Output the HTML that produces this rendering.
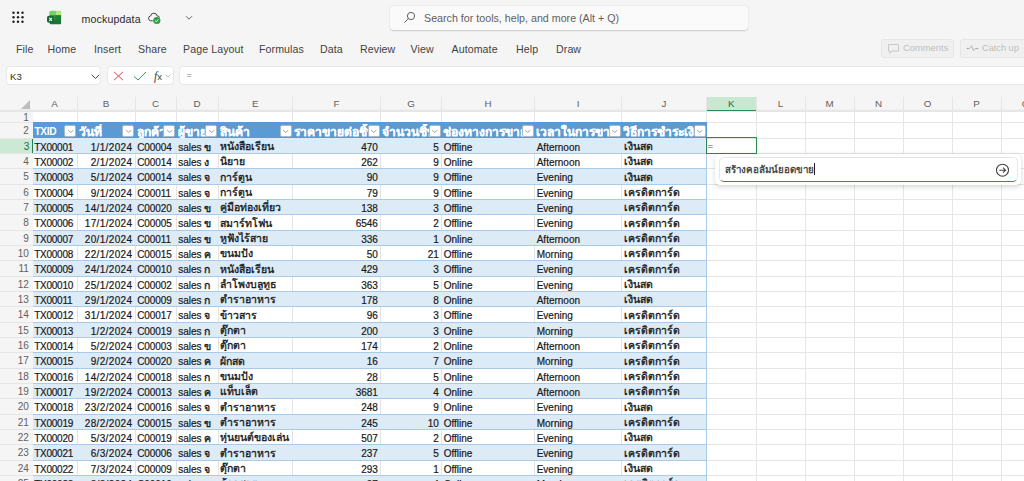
<!DOCTYPE html><html><head><meta charset="utf-8"><style>*{margin:0;padding:0;box-sizing:border-box}
html,body{width:1024px;height:481px;overflow:hidden;background:#f5f5f5;font-family:"Liberation Sans",sans-serif;position:relative}
.abs{position:absolute}
#grid{position:absolute;left:0;top:0;width:1024px;height:481px;overflow:hidden}
.colhdr{position:absolute;left:0;width:1024px;background:linear-gradient(#f5f5f5 0,#f5f5f5 12px,#f0f0f0 12px,#f0f0f0 13px,#e7e7e7 13px);border-bottom:1px solid #dadada}
.corner{position:absolute;left:21px;top:99.5px;width:0;height:0;border-left:9px solid transparent;border-bottom:9px solid #bdbdbd}
.ch{position:absolute;text-align:center;font-size:9.8px;color:#5f5f5f;line-height:14.5px}
.ch.sel{background:#c9e8d2;color:#1a6e3c;border-bottom:1.5px solid #2a8a50;line-height:13.5px}
.rh{position:absolute;left:0;width:32px;text-align:right;padding-right:3.2px;font-size:10px;color:#616161}
.rh span{display:block}
.rh.sel{background:#cbe9d4;color:#1a6e3c;border-right:1.5px solid #23824a;padding-right:2.7px;width:33px}
.cells{position:absolute;left:32.5px;width:1000px;height:400px;background:#fff}
.vl{position:absolute;width:1px;height:400px;background:#e6e6e6}
.hl{position:absolute;left:0;width:1024px;height:1px;background:#e6e6e6}
.thead{position:absolute;background:#5b9bd5}
.th{position:absolute;padding-left:1.5px;color:#fff;font-weight:bold;font-size:10.2px;letter-spacing:-0.4px;white-space:nowrap;overflow:hidden}
.fb{position:absolute;width:12px;height:12px;background:#fff;border:0.6px solid #a9b9c8;border-radius:2px}
.fb svg{position:absolute;left:-0.5px;top:-0.5px}
.tr{position:absolute;background:#fff}
.tr.band{background:#ddebf7}
.tvl{position:absolute;width:1px;background:#e3e3e3}
.tbl{position:absolute;height:1px;background:#a9cbea}
.tvr{position:absolute;width:1px;background:#a9cbea}
.td{position:absolute;font-size:10px;color:#1a1a1a;white-space:nowrap;overflow:hidden;padding:0 2.6px 0 2.2px;-webkit-text-stroke:0.2px #1a1a1a}
.td.r{text-align:right}
.td.th_{font-size:10.5px;margin-top:-1px;-webkit-text-stroke:0.35px #1a1a1a}
.c0{letter-spacing:-0.25px}.c1{letter-spacing:0.35px}.c2{letter-spacing:-0.1px}

.tb{font-size:10.5px;line-height:0;position:relative;top:-0.5px;font-weight:normal;-webkit-text-stroke:0.35px #1a1a1a}

.th.thai{font-size:12px;letter-spacing:0;-webkit-text-stroke:0.2px #fff}
</style></head><body>
<div class="abs" style="left:0;top:0;width:1024px;height:97px;background:#f5f5f5"></div>
<!-- waffle -->
<svg class="abs" style="left:11px;top:10px" width="14" height="14" viewBox="0 0 14 14"><g fill="#1e1e1e"><circle cx="2.5" cy="2.8" r="1.2"/><circle cx="7" cy="2.8" r="1.2"/><circle cx="11.5" cy="2.8" r="1.2"/><circle cx="2.5" cy="7.2" r="1.2"/><circle cx="7" cy="7.2" r="1.2"/><circle cx="11.5" cy="7.2" r="1.2"/><circle cx="2.5" cy="11.8" r="1.2"/><circle cx="7" cy="11.8" r="1.2"/><circle cx="11.5" cy="11.8" r="1.2"/></g></svg>
<!-- excel logo -->
<svg class="abs" style="left:46px;top:10px" width="16" height="15" viewBox="0 0 16 15">
<clipPath id="lc"><rect x="3.5" y="0.75" width="11.75" height="13.75" rx="1.6"/></clipPath>
<g clip-path="url(#lc)">
<rect x="3.5" y="0.75" width="11.75" height="13.75" fill="#1d7436"/>
<rect x="3.5" y="0.75" width="5.9" height="4.6" fill="#6cd46a"/>
<rect x="9.4" y="0.75" width="5.9" height="4.6" fill="#b6e97c"/>
<rect x="3.5" y="5.35" width="5.9" height="4.7" fill="#3ea64a"/>
<rect x="9.4" y="5.35" width="5.9" height="4.7" fill="#217f3a"/>
</g>
<rect x="1" y="5.8" width="7.3" height="7" rx="1.8" fill="#176a3a"/>
<path d="M3.3 7.9 L6 10.9 M6 7.9 L3.3 10.9" stroke="#f4fff6" stroke-width="1.05"/>
</svg>
<div class="abs" style="left:81.5px;top:10.5px;font-size:10.6px;color:#2a2a2a;line-height:16px;letter-spacing:0.15px">mockupdata</div>
<!-- cloud -->
<svg class="abs" style="left:147px;top:11px" width="15" height="15" viewBox="0 0 15 15">
<path d="M5.8 9.8 H3.7 A2.45 2.45 0 0 1 3.6 4.95 A3.3 3.3 0 0 1 10.1 4.9 A2.2 2.2 0 0 1 12.5 6.6" fill="none" stroke="#3a3a3a" stroke-width="0.95"/>
<circle cx="9.8" cy="9.5" r="3.6" fill="#2e9e48"/>
<path d="M8.1 9.7 L9.3 10.8 L11.4 8.5" fill="none" stroke="#fff" stroke-width="0.9"/>
</svg>
<svg class="abs" style="left:185px;top:15px" width="8" height="6" viewBox="0 0 8 6"><path d="M1 1.2 L4 4.2 L7 1.2" fill="none" stroke="#555" stroke-width="0.9"/></svg>
<!-- search -->
<div class="abs" style="left:390px;top:5.5px;width:358px;height:24.5px;background:#fafafa;border-radius:4px;box-shadow:0 0.5px 1.5px rgba(0,0,0,0.18)"></div>
<svg class="abs" style="left:403px;top:11px" width="13" height="13" viewBox="0 0 13 13"><circle cx="8" cy="5" r="3.6" fill="none" stroke="#606060" stroke-width="1"/><path d="M5.4 7.6 L1.5 11.5" stroke="#606060" stroke-width="1"/></svg>
<div class="abs" style="left:424px;top:11px;font-size:10.7px;color:#616161;line-height:15px;white-space:nowrap">Search for tools, help, and more (Alt + Q)</div>
<!-- ribbon tabs -->
<div class="abs tabs" style="top:41.5px;font-size:10.6px;color:#424242;line-height:14px;white-space:nowrap;letter-spacing:0.1px">
<span class="abs" style="left:16px">File</span>
<span class="abs" style="left:47.5px">Home</span>
<span class="abs" style="left:94px">Insert</span>
<span class="abs" style="left:138px">Share</span>
<span class="abs" style="left:183px">Page Layout</span>
<span class="abs" style="left:259px">Formulas</span>
<span class="abs" style="left:320px">Data</span>
<span class="abs" style="left:360px">Review</span>
<span class="abs" style="left:410.5px">View</span>
<span class="abs" style="left:451.5px">Automate</span>
<span class="abs" style="left:516px">Help</span>
<span class="abs" style="left:556px">Draw</span>
</div>
<!-- comments / catch up -->
<div class="abs" style="left:881px;top:39px;width:72.5px;height:18.5px;border:1px solid #e6e6e6;border-radius:3px;background:#f0f0f0"></div>
<svg class="abs" style="left:887px;top:43px" width="13" height="11" viewBox="0 0 13 11"><path d="M1.5 1 H11.5 V7.5 H5 L3 9.8 V7.5 H1.5 Z" fill="none" stroke="#c4c4c4" stroke-width="0.9" stroke-linejoin="round" transform="translate(0,0.5)"/></svg>
<div class="abs" style="left:903px;top:40.8px;font-size:9.4px;color:#bdbdbd;line-height:14px">Comments</div>
<div class="abs" style="left:960px;top:39px;width:70px;height:18.5px;border:1px solid #e6e6e6;border-radius:3px;background:#f0f0f0"></div>
<svg class="abs" style="left:966px;top:44px" width="13" height="9" viewBox="0 0 13 9"><path d="M1.5 4.5 H3.5 L5.5 1.8 L7.5 6.8 L9 4.5 H11.5" fill="none" stroke="#b0b0b0" stroke-width="0.9"/><circle cx="1.5" cy="4.5" r="0.8" fill="#a0a0a0"/><circle cx="11.5" cy="4.5" r="0.8" fill="#a0a0a0"/></svg>
<div class="abs" style="left:982px;top:40.8px;font-size:9.2px;color:#bdbdbd;line-height:14px;white-space:nowrap">Catch up</div>
<!-- formula bar -->
<div class="abs" style="left:6px;top:66.2px;width:95px;height:19.2px;background:#fff;border:1.5px solid #e8e8e8;border-radius:4px"></div>
<div class="abs" style="left:10px;top:70.3px;font-size:9.6px;color:#2e2e2e;line-height:14px">K3</div>
<svg class="abs" style="left:90.5px;top:74px" width="9" height="6" viewBox="0 0 9 6"><path d="M0.8 0.8 L4.5 4.5 L8.2 0.8" fill="none" stroke="#444" stroke-width="1"/></svg>
<div class="abs" style="left:107px;top:66.2px;width:66.5px;height:19.2px;background:#fff;border:1.5px solid #e8e8e8;border-radius:4px"></div>
<svg class="abs" style="left:113px;top:71px" width="11" height="10" viewBox="0 0 11 10"><path d="M1 0.8 L10 9.2 M10 0.8 L1 9.2" stroke="#e0424a" stroke-width="1"/></svg>
<svg class="abs" style="left:133px;top:70.5px" width="14" height="10" viewBox="0 0 14 10"><path d="M1 5.5 L5 9 L13 1" fill="none" stroke="#3aa35a" stroke-width="1"/></svg>
<div class="abs" style="left:154px;top:69px;font-size:11.5px;font-style:italic;color:#3a3a3a;line-height:14px;font-family:'Liberation Serif',serif">f<span style="font-size:9.5px;font-style:normal;font-family:'Liberation Sans',sans-serif">x</span></div>
<svg class="abs" style="left:165px;top:74px" width="6" height="4" viewBox="0 0 6 4"><path d="M0.8 0.8 L3 3 L5.2 0.8" fill="none" stroke="#999" stroke-width="0.7"/></svg>
<div class="abs" style="left:179px;top:66.2px;width:850px;height:19.2px;background:#fff;border:1.5px solid #e8e8e8;border-radius:4px"></div>
<div class="abs" style="left:186.5px;top:68.3px;font-size:9px;color:#777;line-height:14px">=</div>

<div id="grid"><div class="colhdr" style="top:97px;height:15px"></div><div class="corner"></div><div class="ch" style="left:32px;width:45px;top:97px;height:14px">A</div><div class="ch" style="left:77px;width:58px;top:97px;height:14px">B</div><div class="ch" style="left:135px;width:41px;top:97px;height:14px">C</div><div class="ch" style="left:176px;width:42px;top:97px;height:14px">D</div><div class="ch" style="left:218px;width:74.5px;top:97px;height:14px">E</div><div class="ch" style="left:292.5px;width:88.0px;top:97px;height:14px">F</div><div class="ch" style="left:380.5px;width:61.0px;top:97px;height:14px">G</div><div class="ch" style="left:441.5px;width:93.0px;top:97px;height:14px">H</div><div class="ch" style="left:534.5px;width:87.0px;top:97px;height:14px">I</div><div class="ch" style="left:621.5px;width:85.0px;top:97px;height:14px">J</div><div class="ch sel" style="left:706.5px;width:49.5px;top:97px;height:14px">K</div><div class="ch" style="left:756px;width:49px;top:97px;height:14px">L</div><div class="ch" style="left:805px;width:49px;top:97px;height:14px">M</div><div class="ch" style="left:854px;width:49px;top:97px;height:14px">N</div><div class="ch" style="left:903px;width:49px;top:97px;height:14px">O</div><div class="ch" style="left:952px;width:49px;top:97px;height:14px">P</div><div class="ch" style="left:1001px;width:49px;top:97px;height:14px">Q</div><div class="rh" style="top:111.00px;height:11.00px"><span style="line-height:11.00px;margin-top:1.4px">1</span></div><div class="rh" style="top:122.00px;height:16.00px"><span style="line-height:16.00px;margin-top:1.4px">2</span></div><div class="rh sel" style="top:138.00px;height:15.00px"><span style="line-height:15.00px;margin-top:1.4px">3</span></div><div class="rh" style="top:153.00px;height:15.00px"><span style="line-height:15.00px;margin-top:1.4px">4</span></div><div class="rh" style="top:168.00px;height:16.00px"><span style="line-height:16.00px;margin-top:1.4px">5</span></div><div class="rh" style="top:184.00px;height:15.00px"><span style="line-height:15.00px;margin-top:1.4px">6</span></div><div class="rh" style="top:199.00px;height:15.00px"><span style="line-height:15.00px;margin-top:1.4px">7</span></div><div class="rh" style="top:214.00px;height:16.00px"><span style="line-height:16.00px;margin-top:1.4px">8</span></div><div class="rh" style="top:230.00px;height:15.00px"><span style="line-height:15.00px;margin-top:1.4px">9</span></div><div class="rh" style="top:245.00px;height:15.00px"><span style="line-height:15.00px;margin-top:1.4px">10</span></div><div class="rh" style="top:260.00px;height:16.00px"><span style="line-height:16.00px;margin-top:1.4px">11</span></div><div class="rh" style="top:276.00px;height:15.00px"><span style="line-height:15.00px;margin-top:1.4px">12</span></div><div class="rh" style="top:291.00px;height:15.00px"><span style="line-height:15.00px;margin-top:1.4px">13</span></div><div class="rh" style="top:306.00px;height:16.00px"><span style="line-height:16.00px;margin-top:1.4px">14</span></div><div class="rh" style="top:322.00px;height:15.00px"><span style="line-height:15.00px;margin-top:1.4px">15</span></div><div class="rh" style="top:337.00px;height:15.00px"><span style="line-height:15.00px;margin-top:1.4px">16</span></div><div class="rh" style="top:352.00px;height:16.00px"><span style="line-height:16.00px;margin-top:1.4px">17</span></div><div class="rh" style="top:368.00px;height:15.00px"><span style="line-height:15.00px;margin-top:1.4px">18</span></div><div class="rh" style="top:383.00px;height:15.00px"><span style="line-height:15.00px;margin-top:1.4px">19</span></div><div class="rh" style="top:398.00px;height:16.00px"><span style="line-height:16.00px;margin-top:1.4px">20</span></div><div class="rh" style="top:414.00px;height:15.00px"><span style="line-height:15.00px;margin-top:1.4px">21</span></div><div class="rh" style="top:429.00px;height:15.00px"><span style="line-height:15.00px;margin-top:1.4px">22</span></div><div class="rh" style="top:444.00px;height:16.00px"><span style="line-height:16.00px;margin-top:1.4px">23</span></div><div class="rh" style="top:460.00px;height:15.00px"><span style="line-height:15.00px;margin-top:1.4px">24</span></div><div class="rh" style="top:475.00px;height:15.00px"><span style="line-height:15.00px;margin-top:1.4px">25</span></div><div class="cells" style="top:111px"></div><div class="vl" style="left:76.5px;top:97px"></div><div class="vl" style="left:134.5px;top:97px"></div><div class="vl" style="left:175.5px;top:97px"></div><div class="vl" style="left:217.5px;top:97px"></div><div class="vl" style="left:292.0px;top:97px"></div><div class="vl" style="left:380.0px;top:97px"></div><div class="vl" style="left:441.0px;top:97px"></div><div class="vl" style="left:534.0px;top:97px"></div><div class="vl" style="left:621.0px;top:97px"></div><div class="vl" style="left:706.0px;top:97px"></div><div class="vl" style="left:755.5px;top:97px"></div><div class="vl" style="left:804.5px;top:97px"></div><div class="vl" style="left:853.5px;top:97px"></div><div class="vl" style="left:902.5px;top:97px"></div><div class="vl" style="left:951.5px;top:97px"></div><div class="vl" style="left:1000.5px;top:97px"></div><div class="vl" style="left:1049.5px;top:97px"></div><div class="hl" style="top:111px"></div><div class="hl" style="top:122px"></div><div class="hl" style="top:138px"></div><div class="hl" style="top:153px"></div><div class="hl" style="top:168px"></div><div class="hl" style="top:184px"></div><div class="hl" style="top:199px"></div><div class="hl" style="top:214px"></div><div class="hl" style="top:230px"></div><div class="hl" style="top:245px"></div><div class="hl" style="top:260px"></div><div class="hl" style="top:276px"></div><div class="hl" style="top:291px"></div><div class="hl" style="top:306px"></div><div class="hl" style="top:322px"></div><div class="hl" style="top:337px"></div><div class="hl" style="top:352px"></div><div class="hl" style="top:368px"></div><div class="hl" style="top:383px"></div><div class="hl" style="top:398px"></div><div class="hl" style="top:414px"></div><div class="hl" style="top:429px"></div><div class="hl" style="top:444px"></div><div class="hl" style="top:460px"></div><div class="hl" style="top:475px"></div><div class="hl" style="top:490px"></div><div class="thead" style="left:33px;width:673.5px;top:122px;height:16.5px"></div><div class="th" style="left:33px;width:44px;top:123.8px;height:14.2px;line-height:16px">TXID</div><div class="fb" style="left:64px;top:124.6px"><svg width="12" height="12" viewBox="0 0 12 12"><path d="M3.1 5.3 L5.7 7.3 L8.3 5.3" fill="none" stroke="#8a8a8a" stroke-width="0.8"/></svg></div><div class="th thai" style="left:77px;width:58px;top:123.8px;height:14.2px;line-height:16px">วันที่</div><div class="fb" style="left:122px;top:124.6px"><svg width="12" height="12" viewBox="0 0 12 12"><path d="M3.1 5.3 L5.7 7.3 L8.3 5.3" fill="none" stroke="#8a8a8a" stroke-width="0.8"/></svg></div><div class="th thai" style="left:135px;width:41px;top:123.8px;height:14.2px;line-height:16px">ลูกค้า</div><div class="fb" style="left:163px;top:124.6px"><svg width="12" height="12" viewBox="0 0 12 12"><path d="M3.1 5.3 L5.7 7.3 L8.3 5.3" fill="none" stroke="#8a8a8a" stroke-width="0.8"/></svg></div><div class="th thai" style="left:176px;width:42px;top:123.8px;height:14.2px;line-height:16px">ผู้ขาย</div><div class="fb" style="left:205px;top:124.6px"><svg width="12" height="12" viewBox="0 0 12 12"><path d="M3.1 5.3 L5.7 7.3 L8.3 5.3" fill="none" stroke="#8a8a8a" stroke-width="0.8"/></svg></div><div class="th thai" style="left:218px;width:74.5px;top:123.8px;height:14.2px;line-height:16px">สินค้า</div><div class="fb" style="left:279.5px;top:124.6px"><svg width="12" height="12" viewBox="0 0 12 12"><path d="M3.1 5.3 L5.7 7.3 L8.3 5.3" fill="none" stroke="#8a8a8a" stroke-width="0.8"/></svg></div><div class="th thai" style="left:292.5px;width:88.0px;top:123.8px;height:14.2px;line-height:16px">ราคาขายต่อชิ้น</div><div class="fb" style="left:367.5px;top:124.6px"><svg width="12" height="12" viewBox="0 0 12 12"><path d="M3.1 5.3 L5.7 7.3 L8.3 5.3" fill="none" stroke="#8a8a8a" stroke-width="0.8"/></svg></div><div class="th thai" style="left:380.5px;width:61.0px;top:123.8px;height:14.2px;line-height:16px">จำนวนชิ้น</div><div class="fb" style="left:428.5px;top:124.6px"><svg width="12" height="12" viewBox="0 0 12 12"><path d="M3.1 5.3 L5.7 7.3 L8.3 5.3" fill="none" stroke="#8a8a8a" stroke-width="0.8"/></svg></div><div class="th thai" style="left:441.5px;width:93.0px;top:123.8px;height:14.2px;line-height:16px">ช่องทางการขาย</div><div class="fb" style="left:521.5px;top:124.6px"><svg width="12" height="12" viewBox="0 0 12 12"><path d="M3.1 5.3 L5.7 7.3 L8.3 5.3" fill="none" stroke="#8a8a8a" stroke-width="0.8"/></svg></div><div class="th thai" style="left:534.5px;width:87.0px;top:123.8px;height:14.2px;line-height:16px">เวลาในการขาย</div><div class="fb" style="left:608.5px;top:124.6px"><svg width="12" height="12" viewBox="0 0 12 12"><path d="M3.1 5.3 L5.7 7.3 L8.3 5.3" fill="none" stroke="#8a8a8a" stroke-width="0.8"/></svg></div><div class="th thai" style="left:621.5px;width:85.0px;top:123.8px;height:14.2px;line-height:16px">วิธีการชำระเงิน</div><div class="fb" style="left:693.5px;top:124.6px"><svg width="12" height="12" viewBox="0 0 12 12"><path d="M3.1 5.3 L5.7 7.3 L8.3 5.3" fill="none" stroke="#8a8a8a" stroke-width="0.8"/></svg></div><div class="tr band" style="left:33px;width:673.5px;top:138.00px;height:15.00px"></div><div class="tr" style="left:33px;width:673.5px;top:153.00px;height:15.00px"></div><div class="tvl" style="left:76.5px;top:153.00px;height:15.00px"></div><div class="tvl" style="left:134.5px;top:153.00px;height:15.00px"></div><div class="tvl" style="left:175.5px;top:153.00px;height:15.00px"></div><div class="tvl" style="left:217.5px;top:153.00px;height:15.00px"></div><div class="tvl" style="left:292.0px;top:153.00px;height:15.00px"></div><div class="tvl" style="left:380.0px;top:153.00px;height:15.00px"></div><div class="tvl" style="left:441.0px;top:153.00px;height:15.00px"></div><div class="tvl" style="left:534.0px;top:153.00px;height:15.00px"></div><div class="tvl" style="left:621.0px;top:153.00px;height:15.00px"></div><div class="tr band" style="left:33px;width:673.5px;top:168.00px;height:16.00px"></div><div class="tr" style="left:33px;width:673.5px;top:184.00px;height:15.00px"></div><div class="tvl" style="left:76.5px;top:184.00px;height:15.00px"></div><div class="tvl" style="left:134.5px;top:184.00px;height:15.00px"></div><div class="tvl" style="left:175.5px;top:184.00px;height:15.00px"></div><div class="tvl" style="left:217.5px;top:184.00px;height:15.00px"></div><div class="tvl" style="left:292.0px;top:184.00px;height:15.00px"></div><div class="tvl" style="left:380.0px;top:184.00px;height:15.00px"></div><div class="tvl" style="left:441.0px;top:184.00px;height:15.00px"></div><div class="tvl" style="left:534.0px;top:184.00px;height:15.00px"></div><div class="tvl" style="left:621.0px;top:184.00px;height:15.00px"></div><div class="tr band" style="left:33px;width:673.5px;top:199.00px;height:15.00px"></div><div class="tr" style="left:33px;width:673.5px;top:214.00px;height:16.00px"></div><div class="tvl" style="left:76.5px;top:214.00px;height:16.00px"></div><div class="tvl" style="left:134.5px;top:214.00px;height:16.00px"></div><div class="tvl" style="left:175.5px;top:214.00px;height:16.00px"></div><div class="tvl" style="left:217.5px;top:214.00px;height:16.00px"></div><div class="tvl" style="left:292.0px;top:214.00px;height:16.00px"></div><div class="tvl" style="left:380.0px;top:214.00px;height:16.00px"></div><div class="tvl" style="left:441.0px;top:214.00px;height:16.00px"></div><div class="tvl" style="left:534.0px;top:214.00px;height:16.00px"></div><div class="tvl" style="left:621.0px;top:214.00px;height:16.00px"></div><div class="tr band" style="left:33px;width:673.5px;top:230.00px;height:15.00px"></div><div class="tr" style="left:33px;width:673.5px;top:245.00px;height:15.00px"></div><div class="tvl" style="left:76.5px;top:245.00px;height:15.00px"></div><div class="tvl" style="left:134.5px;top:245.00px;height:15.00px"></div><div class="tvl" style="left:175.5px;top:245.00px;height:15.00px"></div><div class="tvl" style="left:217.5px;top:245.00px;height:15.00px"></div><div class="tvl" style="left:292.0px;top:245.00px;height:15.00px"></div><div class="tvl" style="left:380.0px;top:245.00px;height:15.00px"></div><div class="tvl" style="left:441.0px;top:245.00px;height:15.00px"></div><div class="tvl" style="left:534.0px;top:245.00px;height:15.00px"></div><div class="tvl" style="left:621.0px;top:245.00px;height:15.00px"></div><div class="tr band" style="left:33px;width:673.5px;top:260.00px;height:16.00px"></div><div class="tr" style="left:33px;width:673.5px;top:276.00px;height:15.00px"></div><div class="tvl" style="left:76.5px;top:276.00px;height:15.00px"></div><div class="tvl" style="left:134.5px;top:276.00px;height:15.00px"></div><div class="tvl" style="left:175.5px;top:276.00px;height:15.00px"></div><div class="tvl" style="left:217.5px;top:276.00px;height:15.00px"></div><div class="tvl" style="left:292.0px;top:276.00px;height:15.00px"></div><div class="tvl" style="left:380.0px;top:276.00px;height:15.00px"></div><div class="tvl" style="left:441.0px;top:276.00px;height:15.00px"></div><div class="tvl" style="left:534.0px;top:276.00px;height:15.00px"></div><div class="tvl" style="left:621.0px;top:276.00px;height:15.00px"></div><div class="tr band" style="left:33px;width:673.5px;top:291.00px;height:15.00px"></div><div class="tr" style="left:33px;width:673.5px;top:306.00px;height:16.00px"></div><div class="tvl" style="left:76.5px;top:306.00px;height:16.00px"></div><div class="tvl" style="left:134.5px;top:306.00px;height:16.00px"></div><div class="tvl" style="left:175.5px;top:306.00px;height:16.00px"></div><div class="tvl" style="left:217.5px;top:306.00px;height:16.00px"></div><div class="tvl" style="left:292.0px;top:306.00px;height:16.00px"></div><div class="tvl" style="left:380.0px;top:306.00px;height:16.00px"></div><div class="tvl" style="left:441.0px;top:306.00px;height:16.00px"></div><div class="tvl" style="left:534.0px;top:306.00px;height:16.00px"></div><div class="tvl" style="left:621.0px;top:306.00px;height:16.00px"></div><div class="tr band" style="left:33px;width:673.5px;top:322.00px;height:15.00px"></div><div class="tr" style="left:33px;width:673.5px;top:337.00px;height:15.00px"></div><div class="tvl" style="left:76.5px;top:337.00px;height:15.00px"></div><div class="tvl" style="left:134.5px;top:337.00px;height:15.00px"></div><div class="tvl" style="left:175.5px;top:337.00px;height:15.00px"></div><div class="tvl" style="left:217.5px;top:337.00px;height:15.00px"></div><div class="tvl" style="left:292.0px;top:337.00px;height:15.00px"></div><div class="tvl" style="left:380.0px;top:337.00px;height:15.00px"></div><div class="tvl" style="left:441.0px;top:337.00px;height:15.00px"></div><div class="tvl" style="left:534.0px;top:337.00px;height:15.00px"></div><div class="tvl" style="left:621.0px;top:337.00px;height:15.00px"></div><div class="tr band" style="left:33px;width:673.5px;top:352.00px;height:16.00px"></div><div class="tr" style="left:33px;width:673.5px;top:368.00px;height:15.00px"></div><div class="tvl" style="left:76.5px;top:368.00px;height:15.00px"></div><div class="tvl" style="left:134.5px;top:368.00px;height:15.00px"></div><div class="tvl" style="left:175.5px;top:368.00px;height:15.00px"></div><div class="tvl" style="left:217.5px;top:368.00px;height:15.00px"></div><div class="tvl" style="left:292.0px;top:368.00px;height:15.00px"></div><div class="tvl" style="left:380.0px;top:368.00px;height:15.00px"></div><div class="tvl" style="left:441.0px;top:368.00px;height:15.00px"></div><div class="tvl" style="left:534.0px;top:368.00px;height:15.00px"></div><div class="tvl" style="left:621.0px;top:368.00px;height:15.00px"></div><div class="tr band" style="left:33px;width:673.5px;top:383.00px;height:15.00px"></div><div class="tr" style="left:33px;width:673.5px;top:398.00px;height:16.00px"></div><div class="tvl" style="left:76.5px;top:398.00px;height:16.00px"></div><div class="tvl" style="left:134.5px;top:398.00px;height:16.00px"></div><div class="tvl" style="left:175.5px;top:398.00px;height:16.00px"></div><div class="tvl" style="left:217.5px;top:398.00px;height:16.00px"></div><div class="tvl" style="left:292.0px;top:398.00px;height:16.00px"></div><div class="tvl" style="left:380.0px;top:398.00px;height:16.00px"></div><div class="tvl" style="left:441.0px;top:398.00px;height:16.00px"></div><div class="tvl" style="left:534.0px;top:398.00px;height:16.00px"></div><div class="tvl" style="left:621.0px;top:398.00px;height:16.00px"></div><div class="tr band" style="left:33px;width:673.5px;top:414.00px;height:15.00px"></div><div class="tr" style="left:33px;width:673.5px;top:429.00px;height:15.00px"></div><div class="tvl" style="left:76.5px;top:429.00px;height:15.00px"></div><div class="tvl" style="left:134.5px;top:429.00px;height:15.00px"></div><div class="tvl" style="left:175.5px;top:429.00px;height:15.00px"></div><div class="tvl" style="left:217.5px;top:429.00px;height:15.00px"></div><div class="tvl" style="left:292.0px;top:429.00px;height:15.00px"></div><div class="tvl" style="left:380.0px;top:429.00px;height:15.00px"></div><div class="tvl" style="left:441.0px;top:429.00px;height:15.00px"></div><div class="tvl" style="left:534.0px;top:429.00px;height:15.00px"></div><div class="tvl" style="left:621.0px;top:429.00px;height:15.00px"></div><div class="tr band" style="left:33px;width:673.5px;top:444.00px;height:16.00px"></div><div class="tr" style="left:33px;width:673.5px;top:460.00px;height:15.00px"></div><div class="tvl" style="left:76.5px;top:460.00px;height:15.00px"></div><div class="tvl" style="left:134.5px;top:460.00px;height:15.00px"></div><div class="tvl" style="left:175.5px;top:460.00px;height:15.00px"></div><div class="tvl" style="left:217.5px;top:460.00px;height:15.00px"></div><div class="tvl" style="left:292.0px;top:460.00px;height:15.00px"></div><div class="tvl" style="left:380.0px;top:460.00px;height:15.00px"></div><div class="tvl" style="left:441.0px;top:460.00px;height:15.00px"></div><div class="tvl" style="left:534.0px;top:460.00px;height:15.00px"></div><div class="tvl" style="left:621.0px;top:460.00px;height:15.00px"></div><div class="tr band" style="left:33px;width:673.5px;top:475.00px;height:15.00px"></div><div class="tbl" style="left:33px;width:673.5px;top:153px"></div><div class="tbl" style="left:33px;width:673.5px;top:168px"></div><div class="tbl" style="left:33px;width:673.5px;top:184px"></div><div class="tbl" style="left:33px;width:673.5px;top:199px"></div><div class="tbl" style="left:33px;width:673.5px;top:214px"></div><div class="tbl" style="left:33px;width:673.5px;top:230px"></div><div class="tbl" style="left:33px;width:673.5px;top:245px"></div><div class="tbl" style="left:33px;width:673.5px;top:260px"></div><div class="tbl" style="left:33px;width:673.5px;top:276px"></div><div class="tbl" style="left:33px;width:673.5px;top:291px"></div><div class="tbl" style="left:33px;width:673.5px;top:306px"></div><div class="tbl" style="left:33px;width:673.5px;top:322px"></div><div class="tbl" style="left:33px;width:673.5px;top:337px"></div><div class="tbl" style="left:33px;width:673.5px;top:352px"></div><div class="tbl" style="left:33px;width:673.5px;top:368px"></div><div class="tbl" style="left:33px;width:673.5px;top:383px"></div><div class="tbl" style="left:33px;width:673.5px;top:398px"></div><div class="tbl" style="left:33px;width:673.5px;top:414px"></div><div class="tbl" style="left:33px;width:673.5px;top:429px"></div><div class="tbl" style="left:33px;width:673.5px;top:444px"></div><div class="tbl" style="left:33px;width:673.5px;top:460px"></div><div class="tbl" style="left:33px;width:673.5px;top:475px"></div><div class="tvr" style="left:706.0px;top:138px;height:343px"></div><div class="td l c0" style="left:32px;width:45px;top:140.10px;height:12.90px;line-height:15.00px">TX00001</div><div class="td r c1" style="left:77px;width:58px;top:140.10px;height:12.90px;line-height:15.00px">1/1/2024</div><div class="td l c2" style="left:135px;width:41px;top:140.10px;height:12.90px;line-height:15.00px">C00004</div><div class="td l c3" style="left:176px;width:42px;top:140.10px;height:12.90px;line-height:15.00px">sales <b class="tb">ข</b></div><div class="td l th_ c4" style="left:218px;width:74.5px;top:140.10px;height:12.90px;line-height:15.00px">หนังสือเรียน</div><div class="td r c5" style="left:292.5px;width:88.0px;top:140.10px;height:12.90px;line-height:15.00px">470</div><div class="td r c6" style="left:380.5px;width:61.0px;top:140.10px;height:12.90px;line-height:15.00px">5</div><div class="td l c7" style="left:441.5px;width:93.0px;top:140.10px;height:12.90px;line-height:15.00px">Offline</div><div class="td l c8" style="left:534.5px;width:87.0px;top:140.10px;height:12.90px;line-height:15.00px">Afternoon</div><div class="td l th_ c9" style="left:621.5px;width:85.0px;top:140.10px;height:12.90px;line-height:15.00px">เงินสด</div><div class="td l c0" style="left:32px;width:45px;top:155.10px;height:12.90px;line-height:15.00px">TX00002</div><div class="td r c1" style="left:77px;width:58px;top:155.10px;height:12.90px;line-height:15.00px">2/1/2024</div><div class="td l c2" style="left:135px;width:41px;top:155.10px;height:12.90px;line-height:15.00px">C00014</div><div class="td l c3" style="left:176px;width:42px;top:155.10px;height:12.90px;line-height:15.00px">sales <b class="tb">ง</b></div><div class="td l th_ c4" style="left:218px;width:74.5px;top:155.10px;height:12.90px;line-height:15.00px">นิยาย</div><div class="td r c5" style="left:292.5px;width:88.0px;top:155.10px;height:12.90px;line-height:15.00px">262</div><div class="td r c6" style="left:380.5px;width:61.0px;top:155.10px;height:12.90px;line-height:15.00px">9</div><div class="td l c7" style="left:441.5px;width:93.0px;top:155.10px;height:12.90px;line-height:15.00px">Online</div><div class="td l c8" style="left:534.5px;width:87.0px;top:155.10px;height:12.90px;line-height:15.00px">Afternoon</div><div class="td l th_ c9" style="left:621.5px;width:85.0px;top:155.10px;height:12.90px;line-height:15.00px">เงินสด</div><div class="td l c0" style="left:32px;width:45px;top:170.10px;height:13.90px;line-height:16.00px">TX00003</div><div class="td r c1" style="left:77px;width:58px;top:170.10px;height:13.90px;line-height:16.00px">5/1/2024</div><div class="td l c2" style="left:135px;width:41px;top:170.10px;height:13.90px;line-height:16.00px">C00014</div><div class="td l c3" style="left:176px;width:42px;top:170.10px;height:13.90px;line-height:16.00px">sales <b class="tb">จ</b></div><div class="td l th_ c4" style="left:218px;width:74.5px;top:170.10px;height:13.90px;line-height:16.00px">การ์ตูน</div><div class="td r c5" style="left:292.5px;width:88.0px;top:170.10px;height:13.90px;line-height:16.00px">90</div><div class="td r c6" style="left:380.5px;width:61.0px;top:170.10px;height:13.90px;line-height:16.00px">9</div><div class="td l c7" style="left:441.5px;width:93.0px;top:170.10px;height:13.90px;line-height:16.00px">Offline</div><div class="td l c8" style="left:534.5px;width:87.0px;top:170.10px;height:13.90px;line-height:16.00px">Evening</div><div class="td l th_ c9" style="left:621.5px;width:85.0px;top:170.10px;height:13.90px;line-height:16.00px">เงินสด</div><div class="td l c0" style="left:32px;width:45px;top:186.10px;height:12.90px;line-height:15.00px">TX00004</div><div class="td r c1" style="left:77px;width:58px;top:186.10px;height:12.90px;line-height:15.00px">9/1/2024</div><div class="td l c2" style="left:135px;width:41px;top:186.10px;height:12.90px;line-height:15.00px">C00011</div><div class="td l c3" style="left:176px;width:42px;top:186.10px;height:12.90px;line-height:15.00px">sales <b class="tb">จ</b></div><div class="td l th_ c4" style="left:218px;width:74.5px;top:186.10px;height:12.90px;line-height:15.00px">การ์ตูน</div><div class="td r c5" style="left:292.5px;width:88.0px;top:186.10px;height:12.90px;line-height:15.00px">79</div><div class="td r c6" style="left:380.5px;width:61.0px;top:186.10px;height:12.90px;line-height:15.00px">9</div><div class="td l c7" style="left:441.5px;width:93.0px;top:186.10px;height:12.90px;line-height:15.00px">Offline</div><div class="td l c8" style="left:534.5px;width:87.0px;top:186.10px;height:12.90px;line-height:15.00px">Evening</div><div class="td l th_ c9" style="left:621.5px;width:85.0px;top:186.10px;height:12.90px;line-height:15.00px">เครดิตการ์ด</div><div class="td l c0" style="left:32px;width:45px;top:201.10px;height:12.90px;line-height:15.00px">TX00005</div><div class="td r c1" style="left:77px;width:58px;top:201.10px;height:12.90px;line-height:15.00px">14/1/2024</div><div class="td l c2" style="left:135px;width:41px;top:201.10px;height:12.90px;line-height:15.00px">C00020</div><div class="td l c3" style="left:176px;width:42px;top:201.10px;height:12.90px;line-height:15.00px">sales <b class="tb">ข</b></div><div class="td l th_ c4" style="left:218px;width:74.5px;top:201.10px;height:12.90px;line-height:15.00px">คู่มือท่องเที่ยว</div><div class="td r c5" style="left:292.5px;width:88.0px;top:201.10px;height:12.90px;line-height:15.00px">138</div><div class="td r c6" style="left:380.5px;width:61.0px;top:201.10px;height:12.90px;line-height:15.00px">3</div><div class="td l c7" style="left:441.5px;width:93.0px;top:201.10px;height:12.90px;line-height:15.00px">Offline</div><div class="td l c8" style="left:534.5px;width:87.0px;top:201.10px;height:12.90px;line-height:15.00px">Evening</div><div class="td l th_ c9" style="left:621.5px;width:85.0px;top:201.10px;height:12.90px;line-height:15.00px">เครดิตการ์ด</div><div class="td l c0" style="left:32px;width:45px;top:216.10px;height:13.90px;line-height:16.00px">TX00006</div><div class="td r c1" style="left:77px;width:58px;top:216.10px;height:13.90px;line-height:16.00px">17/1/2024</div><div class="td l c2" style="left:135px;width:41px;top:216.10px;height:13.90px;line-height:16.00px">C00005</div><div class="td l c3" style="left:176px;width:42px;top:216.10px;height:13.90px;line-height:16.00px">sales <b class="tb">ข</b></div><div class="td l th_ c4" style="left:218px;width:74.5px;top:216.10px;height:13.90px;line-height:16.00px">สมาร์ทโฟน</div><div class="td r c5" style="left:292.5px;width:88.0px;top:216.10px;height:13.90px;line-height:16.00px">6546</div><div class="td r c6" style="left:380.5px;width:61.0px;top:216.10px;height:13.90px;line-height:16.00px">2</div><div class="td l c7" style="left:441.5px;width:93.0px;top:216.10px;height:13.90px;line-height:16.00px">Offline</div><div class="td l c8" style="left:534.5px;width:87.0px;top:216.10px;height:13.90px;line-height:16.00px">Evening</div><div class="td l th_ c9" style="left:621.5px;width:85.0px;top:216.10px;height:13.90px;line-height:16.00px">เครดิตการ์ด</div><div class="td l c0" style="left:32px;width:45px;top:232.10px;height:12.90px;line-height:15.00px">TX00007</div><div class="td r c1" style="left:77px;width:58px;top:232.10px;height:12.90px;line-height:15.00px">20/1/2024</div><div class="td l c2" style="left:135px;width:41px;top:232.10px;height:12.90px;line-height:15.00px">C00011</div><div class="td l c3" style="left:176px;width:42px;top:232.10px;height:12.90px;line-height:15.00px">sales <b class="tb">ข</b></div><div class="td l th_ c4" style="left:218px;width:74.5px;top:232.10px;height:12.90px;line-height:15.00px">หูฟังไร้สาย</div><div class="td r c5" style="left:292.5px;width:88.0px;top:232.10px;height:12.90px;line-height:15.00px">336</div><div class="td r c6" style="left:380.5px;width:61.0px;top:232.10px;height:12.90px;line-height:15.00px">1</div><div class="td l c7" style="left:441.5px;width:93.0px;top:232.10px;height:12.90px;line-height:15.00px">Online</div><div class="td l c8" style="left:534.5px;width:87.0px;top:232.10px;height:12.90px;line-height:15.00px">Afternoon</div><div class="td l th_ c9" style="left:621.5px;width:85.0px;top:232.10px;height:12.90px;line-height:15.00px">เครดิตการ์ด</div><div class="td l c0" style="left:32px;width:45px;top:247.10px;height:12.90px;line-height:15.00px">TX00008</div><div class="td r c1" style="left:77px;width:58px;top:247.10px;height:12.90px;line-height:15.00px">22/1/2024</div><div class="td l c2" style="left:135px;width:41px;top:247.10px;height:12.90px;line-height:15.00px">C00015</div><div class="td l c3" style="left:176px;width:42px;top:247.10px;height:12.90px;line-height:15.00px">sales <b class="tb">ค</b></div><div class="td l th_ c4" style="left:218px;width:74.5px;top:247.10px;height:12.90px;line-height:15.00px">ขนมปัง</div><div class="td r c5" style="left:292.5px;width:88.0px;top:247.10px;height:12.90px;line-height:15.00px">50</div><div class="td r c6" style="left:380.5px;width:61.0px;top:247.10px;height:12.90px;line-height:15.00px">21</div><div class="td l c7" style="left:441.5px;width:93.0px;top:247.10px;height:12.90px;line-height:15.00px">Offline</div><div class="td l c8" style="left:534.5px;width:87.0px;top:247.10px;height:12.90px;line-height:15.00px">Morning</div><div class="td l th_ c9" style="left:621.5px;width:85.0px;top:247.10px;height:12.90px;line-height:15.00px">เครดิตการ์ด</div><div class="td l c0" style="left:32px;width:45px;top:262.10px;height:13.90px;line-height:16.00px">TX00009</div><div class="td r c1" style="left:77px;width:58px;top:262.10px;height:13.90px;line-height:16.00px">24/1/2024</div><div class="td l c2" style="left:135px;width:41px;top:262.10px;height:13.90px;line-height:16.00px">C00010</div><div class="td l c3" style="left:176px;width:42px;top:262.10px;height:13.90px;line-height:16.00px">sales <b class="tb">ก</b></div><div class="td l th_ c4" style="left:218px;width:74.5px;top:262.10px;height:13.90px;line-height:16.00px">หนังสือเรียน</div><div class="td r c5" style="left:292.5px;width:88.0px;top:262.10px;height:13.90px;line-height:16.00px">429</div><div class="td r c6" style="left:380.5px;width:61.0px;top:262.10px;height:13.90px;line-height:16.00px">3</div><div class="td l c7" style="left:441.5px;width:93.0px;top:262.10px;height:13.90px;line-height:16.00px">Offline</div><div class="td l c8" style="left:534.5px;width:87.0px;top:262.10px;height:13.90px;line-height:16.00px">Evening</div><div class="td l th_ c9" style="left:621.5px;width:85.0px;top:262.10px;height:13.90px;line-height:16.00px">เครดิตการ์ด</div><div class="td l c0" style="left:32px;width:45px;top:278.10px;height:12.90px;line-height:15.00px">TX00010</div><div class="td r c1" style="left:77px;width:58px;top:278.10px;height:12.90px;line-height:15.00px">25/1/2024</div><div class="td l c2" style="left:135px;width:41px;top:278.10px;height:12.90px;line-height:15.00px">C00002</div><div class="td l c3" style="left:176px;width:42px;top:278.10px;height:12.90px;line-height:15.00px">sales <b class="tb">ก</b></div><div class="td l th_ c4" style="left:218px;width:74.5px;top:278.10px;height:12.90px;line-height:15.00px">ลำโพงบลูทูธ</div><div class="td r c5" style="left:292.5px;width:88.0px;top:278.10px;height:12.90px;line-height:15.00px">363</div><div class="td r c6" style="left:380.5px;width:61.0px;top:278.10px;height:12.90px;line-height:15.00px">5</div><div class="td l c7" style="left:441.5px;width:93.0px;top:278.10px;height:12.90px;line-height:15.00px">Online</div><div class="td l c8" style="left:534.5px;width:87.0px;top:278.10px;height:12.90px;line-height:15.00px">Evening</div><div class="td l th_ c9" style="left:621.5px;width:85.0px;top:278.10px;height:12.90px;line-height:15.00px">เงินสด</div><div class="td l c0" style="left:32px;width:45px;top:293.10px;height:12.90px;line-height:15.00px">TX00011</div><div class="td r c1" style="left:77px;width:58px;top:293.10px;height:12.90px;line-height:15.00px">29/1/2024</div><div class="td l c2" style="left:135px;width:41px;top:293.10px;height:12.90px;line-height:15.00px">C00009</div><div class="td l c3" style="left:176px;width:42px;top:293.10px;height:12.90px;line-height:15.00px">sales <b class="tb">ก</b></div><div class="td l th_ c4" style="left:218px;width:74.5px;top:293.10px;height:12.90px;line-height:15.00px">ตำราอาหาร</div><div class="td r c5" style="left:292.5px;width:88.0px;top:293.10px;height:12.90px;line-height:15.00px">178</div><div class="td r c6" style="left:380.5px;width:61.0px;top:293.10px;height:12.90px;line-height:15.00px">8</div><div class="td l c7" style="left:441.5px;width:93.0px;top:293.10px;height:12.90px;line-height:15.00px">Online</div><div class="td l c8" style="left:534.5px;width:87.0px;top:293.10px;height:12.90px;line-height:15.00px">Afternoon</div><div class="td l th_ c9" style="left:621.5px;width:85.0px;top:293.10px;height:12.90px;line-height:15.00px">เงินสด</div><div class="td l c0" style="left:32px;width:45px;top:308.10px;height:13.90px;line-height:16.00px">TX00012</div><div class="td r c1" style="left:77px;width:58px;top:308.10px;height:13.90px;line-height:16.00px">31/1/2024</div><div class="td l c2" style="left:135px;width:41px;top:308.10px;height:13.90px;line-height:16.00px">C00017</div><div class="td l c3" style="left:176px;width:42px;top:308.10px;height:13.90px;line-height:16.00px">sales <b class="tb">จ</b></div><div class="td l th_ c4" style="left:218px;width:74.5px;top:308.10px;height:13.90px;line-height:16.00px">ข้าวสาร</div><div class="td r c5" style="left:292.5px;width:88.0px;top:308.10px;height:13.90px;line-height:16.00px">96</div><div class="td r c6" style="left:380.5px;width:61.0px;top:308.10px;height:13.90px;line-height:16.00px">3</div><div class="td l c7" style="left:441.5px;width:93.0px;top:308.10px;height:13.90px;line-height:16.00px">Offline</div><div class="td l c8" style="left:534.5px;width:87.0px;top:308.10px;height:13.90px;line-height:16.00px">Evening</div><div class="td l th_ c9" style="left:621.5px;width:85.0px;top:308.10px;height:13.90px;line-height:16.00px">เครดิตการ์ด</div><div class="td l c0" style="left:32px;width:45px;top:324.10px;height:12.90px;line-height:15.00px">TX00013</div><div class="td r c1" style="left:77px;width:58px;top:324.10px;height:12.90px;line-height:15.00px">1/2/2024</div><div class="td l c2" style="left:135px;width:41px;top:324.10px;height:12.90px;line-height:15.00px">C00019</div><div class="td l c3" style="left:176px;width:42px;top:324.10px;height:12.90px;line-height:15.00px">sales <b class="tb">ก</b></div><div class="td l th_ c4" style="left:218px;width:74.5px;top:324.10px;height:12.90px;line-height:15.00px">ตุ๊กตา</div><div class="td r c5" style="left:292.5px;width:88.0px;top:324.10px;height:12.90px;line-height:15.00px">200</div><div class="td r c6" style="left:380.5px;width:61.0px;top:324.10px;height:12.90px;line-height:15.00px">3</div><div class="td l c7" style="left:441.5px;width:93.0px;top:324.10px;height:12.90px;line-height:15.00px">Online</div><div class="td l c8" style="left:534.5px;width:87.0px;top:324.10px;height:12.90px;line-height:15.00px">Morning</div><div class="td l th_ c9" style="left:621.5px;width:85.0px;top:324.10px;height:12.90px;line-height:15.00px">เครดิตการ์ด</div><div class="td l c0" style="left:32px;width:45px;top:339.10px;height:12.90px;line-height:15.00px">TX00014</div><div class="td r c1" style="left:77px;width:58px;top:339.10px;height:12.90px;line-height:15.00px">5/2/2024</div><div class="td l c2" style="left:135px;width:41px;top:339.10px;height:12.90px;line-height:15.00px">C00003</div><div class="td l c3" style="left:176px;width:42px;top:339.10px;height:12.90px;line-height:15.00px">sales <b class="tb">ข</b></div><div class="td l th_ c4" style="left:218px;width:74.5px;top:339.10px;height:12.90px;line-height:15.00px">ตุ๊กตา</div><div class="td r c5" style="left:292.5px;width:88.0px;top:339.10px;height:12.90px;line-height:15.00px">174</div><div class="td r c6" style="left:380.5px;width:61.0px;top:339.10px;height:12.90px;line-height:15.00px">2</div><div class="td l c7" style="left:441.5px;width:93.0px;top:339.10px;height:12.90px;line-height:15.00px">Online</div><div class="td l c8" style="left:534.5px;width:87.0px;top:339.10px;height:12.90px;line-height:15.00px">Afternoon</div><div class="td l th_ c9" style="left:621.5px;width:85.0px;top:339.10px;height:12.90px;line-height:15.00px">เครดิตการ์ด</div><div class="td l c0" style="left:32px;width:45px;top:354.10px;height:13.90px;line-height:16.00px">TX00015</div><div class="td r c1" style="left:77px;width:58px;top:354.10px;height:13.90px;line-height:16.00px">9/2/2024</div><div class="td l c2" style="left:135px;width:41px;top:354.10px;height:13.90px;line-height:16.00px">C00020</div><div class="td l c3" style="left:176px;width:42px;top:354.10px;height:13.90px;line-height:16.00px">sales <b class="tb">ค</b></div><div class="td l th_ c4" style="left:218px;width:74.5px;top:354.10px;height:13.90px;line-height:16.00px">ผักสด</div><div class="td r c5" style="left:292.5px;width:88.0px;top:354.10px;height:13.90px;line-height:16.00px">16</div><div class="td r c6" style="left:380.5px;width:61.0px;top:354.10px;height:13.90px;line-height:16.00px">7</div><div class="td l c7" style="left:441.5px;width:93.0px;top:354.10px;height:13.90px;line-height:16.00px">Online</div><div class="td l c8" style="left:534.5px;width:87.0px;top:354.10px;height:13.90px;line-height:16.00px">Morning</div><div class="td l th_ c9" style="left:621.5px;width:85.0px;top:354.10px;height:13.90px;line-height:16.00px">เครดิตการ์ด</div><div class="td l c0" style="left:32px;width:45px;top:370.10px;height:12.90px;line-height:15.00px">TX00016</div><div class="td r c1" style="left:77px;width:58px;top:370.10px;height:12.90px;line-height:15.00px">14/2/2024</div><div class="td l c2" style="left:135px;width:41px;top:370.10px;height:12.90px;line-height:15.00px">C00018</div><div class="td l c3" style="left:176px;width:42px;top:370.10px;height:12.90px;line-height:15.00px">sales <b class="tb">ก</b></div><div class="td l th_ c4" style="left:218px;width:74.5px;top:370.10px;height:12.90px;line-height:15.00px">ขนมปัง</div><div class="td r c5" style="left:292.5px;width:88.0px;top:370.10px;height:12.90px;line-height:15.00px">28</div><div class="td r c6" style="left:380.5px;width:61.0px;top:370.10px;height:12.90px;line-height:15.00px">5</div><div class="td l c7" style="left:441.5px;width:93.0px;top:370.10px;height:12.90px;line-height:15.00px">Online</div><div class="td l c8" style="left:534.5px;width:87.0px;top:370.10px;height:12.90px;line-height:15.00px">Afternoon</div><div class="td l th_ c9" style="left:621.5px;width:85.0px;top:370.10px;height:12.90px;line-height:15.00px">เครดิตการ์ด</div><div class="td l c0" style="left:32px;width:45px;top:385.10px;height:12.90px;line-height:15.00px">TX00017</div><div class="td r c1" style="left:77px;width:58px;top:385.10px;height:12.90px;line-height:15.00px">19/2/2024</div><div class="td l c2" style="left:135px;width:41px;top:385.10px;height:12.90px;line-height:15.00px">C00013</div><div class="td l c3" style="left:176px;width:42px;top:385.10px;height:12.90px;line-height:15.00px">sales <b class="tb">ค</b></div><div class="td l th_ c4" style="left:218px;width:74.5px;top:385.10px;height:12.90px;line-height:15.00px">แท็บเล็ต</div><div class="td r c5" style="left:292.5px;width:88.0px;top:385.10px;height:12.90px;line-height:15.00px">3681</div><div class="td r c6" style="left:380.5px;width:61.0px;top:385.10px;height:12.90px;line-height:15.00px">4</div><div class="td l c7" style="left:441.5px;width:93.0px;top:385.10px;height:12.90px;line-height:15.00px">Online</div><div class="td l c8" style="left:534.5px;width:87.0px;top:385.10px;height:12.90px;line-height:15.00px">Afternoon</div><div class="td l th_ c9" style="left:621.5px;width:85.0px;top:385.10px;height:12.90px;line-height:15.00px">เครดิตการ์ด</div><div class="td l c0" style="left:32px;width:45px;top:400.10px;height:13.90px;line-height:16.00px">TX00018</div><div class="td r c1" style="left:77px;width:58px;top:400.10px;height:13.90px;line-height:16.00px">23/2/2024</div><div class="td l c2" style="left:135px;width:41px;top:400.10px;height:13.90px;line-height:16.00px">C00016</div><div class="td l c3" style="left:176px;width:42px;top:400.10px;height:13.90px;line-height:16.00px">sales <b class="tb">จ</b></div><div class="td l th_ c4" style="left:218px;width:74.5px;top:400.10px;height:13.90px;line-height:16.00px">ตำราอาหาร</div><div class="td r c5" style="left:292.5px;width:88.0px;top:400.10px;height:13.90px;line-height:16.00px">248</div><div class="td r c6" style="left:380.5px;width:61.0px;top:400.10px;height:13.90px;line-height:16.00px">9</div><div class="td l c7" style="left:441.5px;width:93.0px;top:400.10px;height:13.90px;line-height:16.00px">Online</div><div class="td l c8" style="left:534.5px;width:87.0px;top:400.10px;height:13.90px;line-height:16.00px">Evening</div><div class="td l th_ c9" style="left:621.5px;width:85.0px;top:400.10px;height:13.90px;line-height:16.00px">เงินสด</div><div class="td l c0" style="left:32px;width:45px;top:416.10px;height:12.90px;line-height:15.00px">TX00019</div><div class="td r c1" style="left:77px;width:58px;top:416.10px;height:12.90px;line-height:15.00px">28/2/2024</div><div class="td l c2" style="left:135px;width:41px;top:416.10px;height:12.90px;line-height:15.00px">C00015</div><div class="td l c3" style="left:176px;width:42px;top:416.10px;height:12.90px;line-height:15.00px">sales <b class="tb">ข</b></div><div class="td l th_ c4" style="left:218px;width:74.5px;top:416.10px;height:12.90px;line-height:15.00px">ตำราอาหาร</div><div class="td r c5" style="left:292.5px;width:88.0px;top:416.10px;height:12.90px;line-height:15.00px">245</div><div class="td r c6" style="left:380.5px;width:61.0px;top:416.10px;height:12.90px;line-height:15.00px">10</div><div class="td l c7" style="left:441.5px;width:93.0px;top:416.10px;height:12.90px;line-height:15.00px">Offline</div><div class="td l c8" style="left:534.5px;width:87.0px;top:416.10px;height:12.90px;line-height:15.00px">Morning</div><div class="td l th_ c9" style="left:621.5px;width:85.0px;top:416.10px;height:12.90px;line-height:15.00px">เครดิตการ์ด</div><div class="td l c0" style="left:32px;width:45px;top:431.10px;height:12.90px;line-height:15.00px">TX00020</div><div class="td r c1" style="left:77px;width:58px;top:431.10px;height:12.90px;line-height:15.00px">5/3/2024</div><div class="td l c2" style="left:135px;width:41px;top:431.10px;height:12.90px;line-height:15.00px">C00019</div><div class="td l c3" style="left:176px;width:42px;top:431.10px;height:12.90px;line-height:15.00px">sales <b class="tb">ค</b></div><div class="td l th_ c4" style="left:218px;width:74.5px;top:431.10px;height:12.90px;line-height:15.00px">หุ่นยนต์ของเล่น</div><div class="td r c5" style="left:292.5px;width:88.0px;top:431.10px;height:12.90px;line-height:15.00px">507</div><div class="td r c6" style="left:380.5px;width:61.0px;top:431.10px;height:12.90px;line-height:15.00px">2</div><div class="td l c7" style="left:441.5px;width:93.0px;top:431.10px;height:12.90px;line-height:15.00px">Offline</div><div class="td l c8" style="left:534.5px;width:87.0px;top:431.10px;height:12.90px;line-height:15.00px">Evening</div><div class="td l th_ c9" style="left:621.5px;width:85.0px;top:431.10px;height:12.90px;line-height:15.00px">เงินสด</div><div class="td l c0" style="left:32px;width:45px;top:446.10px;height:13.90px;line-height:16.00px">TX00021</div><div class="td r c1" style="left:77px;width:58px;top:446.10px;height:13.90px;line-height:16.00px">6/3/2024</div><div class="td l c2" style="left:135px;width:41px;top:446.10px;height:13.90px;line-height:16.00px">C00006</div><div class="td l c3" style="left:176px;width:42px;top:446.10px;height:13.90px;line-height:16.00px">sales <b class="tb">จ</b></div><div class="td l th_ c4" style="left:218px;width:74.5px;top:446.10px;height:13.90px;line-height:16.00px">ตำราอาหาร</div><div class="td r c5" style="left:292.5px;width:88.0px;top:446.10px;height:13.90px;line-height:16.00px">237</div><div class="td r c6" style="left:380.5px;width:61.0px;top:446.10px;height:13.90px;line-height:16.00px">5</div><div class="td l c7" style="left:441.5px;width:93.0px;top:446.10px;height:13.90px;line-height:16.00px">Offline</div><div class="td l c8" style="left:534.5px;width:87.0px;top:446.10px;height:13.90px;line-height:16.00px">Evening</div><div class="td l th_ c9" style="left:621.5px;width:85.0px;top:446.10px;height:13.90px;line-height:16.00px">เครดิตการ์ด</div><div class="td l c0" style="left:32px;width:45px;top:462.10px;height:12.90px;line-height:15.00px">TX00022</div><div class="td r c1" style="left:77px;width:58px;top:462.10px;height:12.90px;line-height:15.00px">7/3/2024</div><div class="td l c2" style="left:135px;width:41px;top:462.10px;height:12.90px;line-height:15.00px">C00009</div><div class="td l c3" style="left:176px;width:42px;top:462.10px;height:12.90px;line-height:15.00px">sales <b class="tb">จ</b></div><div class="td l th_ c4" style="left:218px;width:74.5px;top:462.10px;height:12.90px;line-height:15.00px">ตุ๊กตา</div><div class="td r c5" style="left:292.5px;width:88.0px;top:462.10px;height:12.90px;line-height:15.00px">293</div><div class="td r c6" style="left:380.5px;width:61.0px;top:462.10px;height:12.90px;line-height:15.00px">1</div><div class="td l c7" style="left:441.5px;width:93.0px;top:462.10px;height:12.90px;line-height:15.00px">Offline</div><div class="td l c8" style="left:534.5px;width:87.0px;top:462.10px;height:12.90px;line-height:15.00px">Evening</div><div class="td l th_ c9" style="left:621.5px;width:85.0px;top:462.10px;height:12.90px;line-height:15.00px">เงินสด</div><div class="td l c0" style="left:32px;width:45px;top:477.10px;height:12.90px;line-height:15.00px">TX00023</div><div class="td r c1" style="left:77px;width:58px;top:477.10px;height:12.90px;line-height:15.00px">8/3/2024</div><div class="td l c2" style="left:135px;width:41px;top:477.10px;height:12.90px;line-height:15.00px">C00010</div><div class="td l c3" style="left:176px;width:42px;top:477.10px;height:12.90px;line-height:15.00px">sales <b class="tb">ก</b></div><div class="td l th_ c4" style="left:218px;width:74.5px;top:477.10px;height:12.90px;line-height:15.00px">ข้าวสาร</div><div class="td r c5" style="left:292.5px;width:88.0px;top:477.10px;height:12.90px;line-height:15.00px">97</div><div class="td r c6" style="left:380.5px;width:61.0px;top:477.10px;height:12.90px;line-height:15.00px">4</div><div class="td l c7" style="left:441.5px;width:93.0px;top:477.10px;height:12.90px;line-height:15.00px">Online</div><div class="td l c8" style="left:534.5px;width:87.0px;top:477.10px;height:12.90px;line-height:15.00px">Morning</div><div class="td l th_ c9" style="left:621.5px;width:85.0px;top:477.10px;height:12.90px;line-height:15.00px">เครดิตการ์ด</div></div>
<!-- K3 selection -->
<div class="abs" style="left:706px;top:137px;width:50.5px;height:16.5px;border:1.6px solid #228b4e"></div>
<div class="abs" style="left:707.5px;top:138.8px;font-size:9.5px;color:#4a4a4a;line-height:13px">=</div>
<!-- popup -->
<div class="abs" style="left:715px;top:154px;width:306px;height:31px;background:#fff;border-radius:5px;box-shadow:0 1.5px 5px rgba(0,0,0,0.16)"></div>
<div class="abs" style="left:719px;top:156.5px;width:298.5px;height:25.5px;background:#fff;border:1px solid #e6e6e6;border-bottom:1.6px solid #2e8f55;border-radius:5px"></div>
<div class="abs" style="left:725px;top:162px;font-size:9.75px;font-weight:bold;color:#4a4a4a;line-height:15px;white-space:nowrap">สร้างคอลัมน์ยอดขาย<span style="display:inline-block;width:1px;height:12px;background:#222;vertical-align:-2px;margin-left:0"></span></div>
<svg class="abs" style="left:995px;top:162.5px" width="15" height="15" viewBox="0 0 15 15"><circle cx="7.5" cy="7.2" r="6" fill="none" stroke="#444" stroke-width="1.1"/><path d="M4.3 7.2 H10.5 M8 4.7 L10.5 7.2 L8 9.7" fill="none" stroke="#444" stroke-width="1.1"/></svg>

</body></html>
